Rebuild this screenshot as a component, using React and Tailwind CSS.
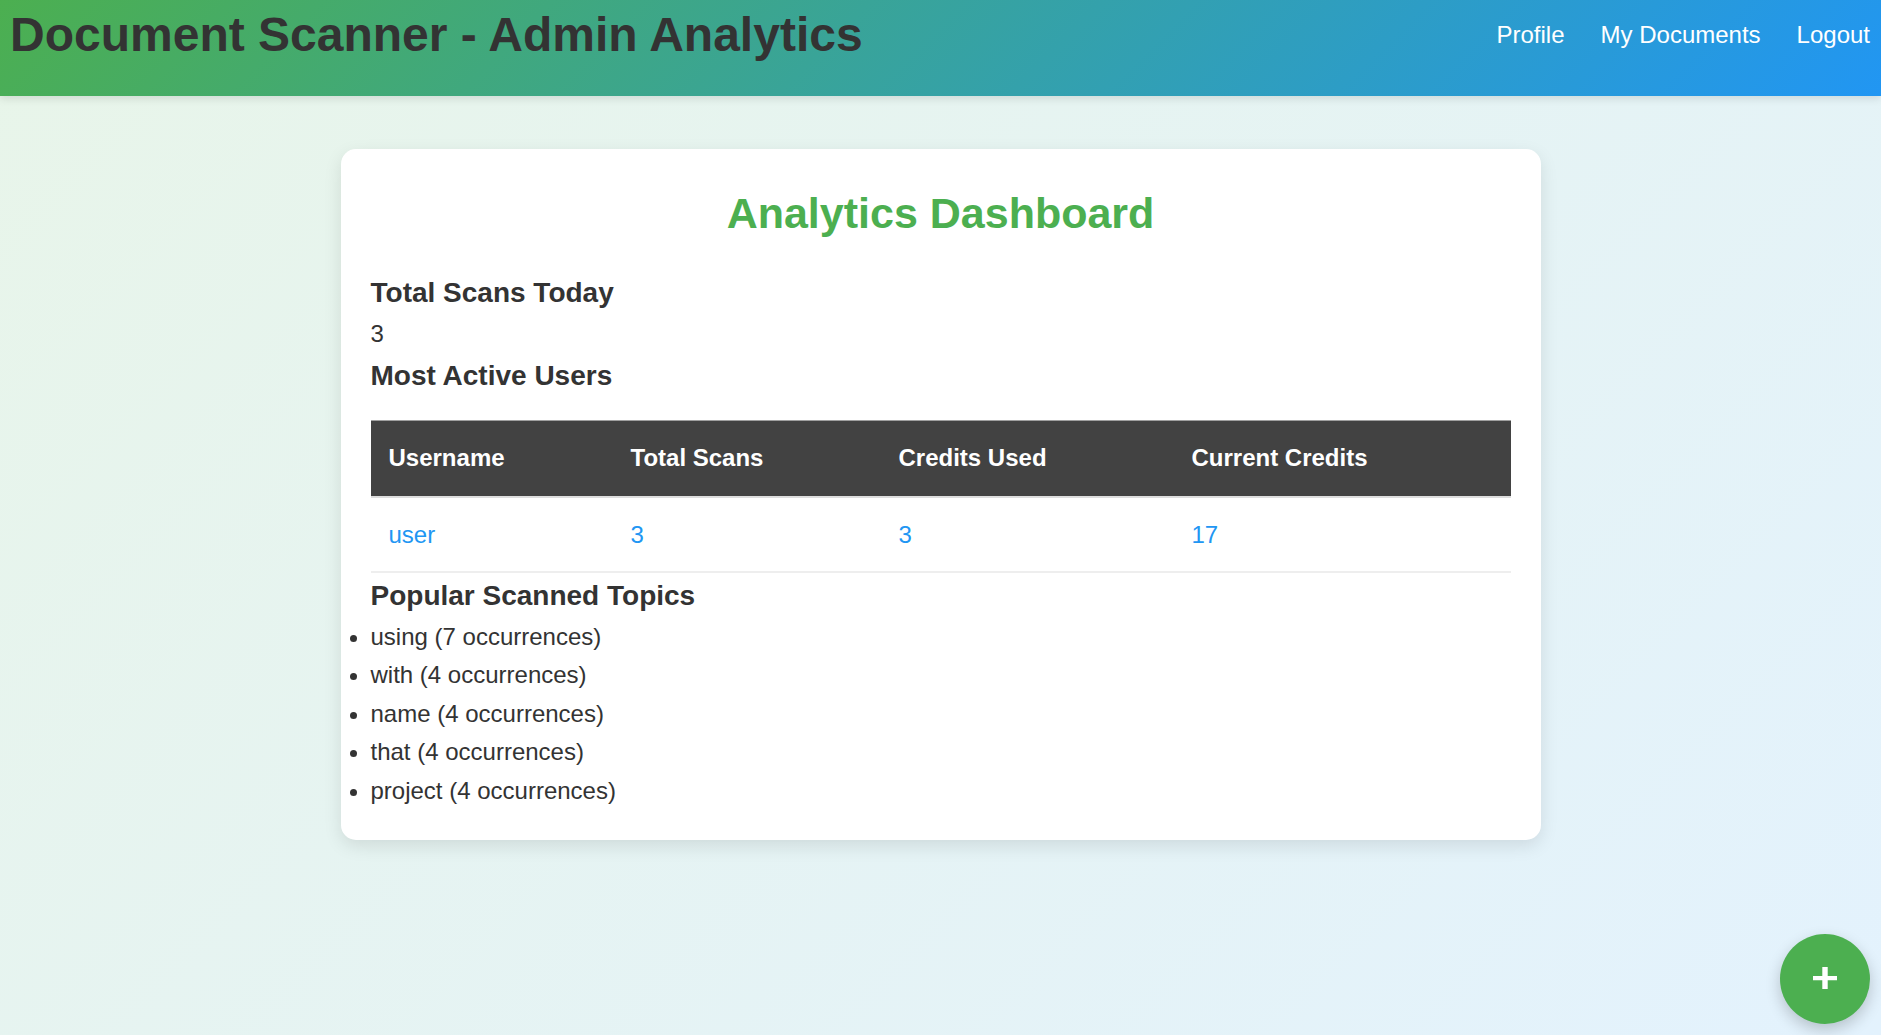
const navLinks = ["Profile", "My Documents", "Logout"];

const columns = [
  { label: "Username", width: "w-[242px]" },
  { label: "Total Scans", width: "w-[268px]" },
  { label: "Credits Used", width: "w-[293px]" },
  { label: "Current Credits", width: "w-[337px]" },
];

const users = [["user", 3, 3, 17]];

const topics = [
  { word: "using", count: 7 },
  { word: "with", count: 4 },
  { word: "name", count: 4 },
  { word: "that", count: 4 },
  { word: "project", count: 4 },
];

function Header() {
  return (
    <header className="flex items-center justify-between bg-[linear-gradient(135deg,#4caf50,#2196f3)] pr-[11px] pb-[26px] pl-[10px] shadow-[0_3px_8px_rgba(0,0,0,0.1)]">
      <h1 className="text-5xl leading-[70px] font-bold">
        Document Scanner - Admin Analytics
      </h1>
      <nav className="flex gap-9 text-white">
        {navLinks.map((label) => (
          <a key={label} href="#">
            {label}
          </a>
        ))}
      </nav>
    </header>
  );
}

function SectionTitle({ children }) {
  return <h3 className="text-[28px] leading-[45px] font-bold">{children}</h3>;
}

function UsersTable() {
  return (
    <table className="mt-[22px] w-full border-collapse text-left">
      <thead className="bg-[#424242] text-white">
        <tr className="border-t border-b-2 border-t-[#a0a0a0] border-b-[#dddddd]">
          {columns.map(({ label, width }) => (
            <th key={label} scope="col" className={`${width} p-[18px] font-bold`}>
              {label}
            </th>
          ))}
        </tr>
      </thead>
      <tbody className="text-[#2196f3]">
        {users.map((row) => (
          <tr key={row[0]} className="border-b-2 border-[#eeeeee]">
            {row.map((value, i) => (
              <td key={columns[i].label} className="px-[18px] pt-[18px] pb-[17px]">
                {value}
              </td>
            ))}
          </tr>
        ))}
      </tbody>
    </table>
  );
}

export default function App() {
  return (
    <div className="min-h-screen bg-[linear-gradient(135deg,#e8f5e9,#e3f2fd)] font-['Liberation_Sans',Arial,sans-serif] text-2xl leading-[1.6] text-[#333333]">
      <Header />
      <main className="mx-auto mt-[53px] max-w-[1200px] rounded-[15px] bg-white p-[30px] shadow-[0_6px_18px_rgba(0,0,0,0.1)]">
        <h2 className="mb-[22px] text-center text-[43px] leading-[1.6] font-bold text-[#4caf50]">
          Analytics Dashboard
        </h2>
        <SectionTitle>Total Scans Today</SectionTitle>
        <p>3</p>
        <SectionTitle>Most Active Users</SectionTitle>
        <UsersTable />
        <SectionTitle>Popular Scanned Topics</SectionTitle>
        <ul className="list-disc">
          {topics.map(({ word, count }) => (
            <li key={word}>{`${word} (${count} occurrences)`}</li>
          ))}
        </ul>
      </main>
      <button
        type="button"
        aria-label="Add"
        className="fixed right-[11px] bottom-[11px] flex size-[90px] items-center justify-center rounded-full bg-[#4caf50] text-white shadow-[0_6px_15px_rgba(0,0,0,0.2)]"
      >
        <svg viewBox="0 0 24 24" className="size-6" fill="currentColor" aria-hidden="true">
          <path d="M9.300 0h5.400v9H24v4.300h-9.300V22H9.300v-8.700H0V9h9.300z" />
        </svg>
      </button>
    </div>
  );
}
